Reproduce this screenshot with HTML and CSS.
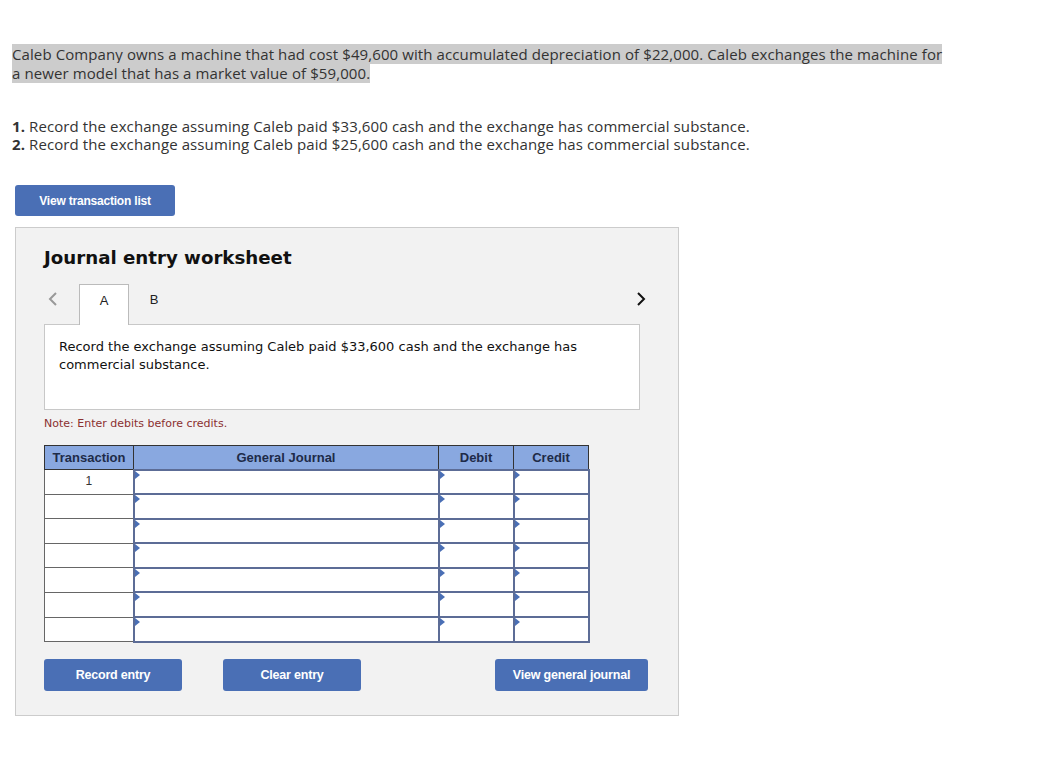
FILE: index.html
```html
<!DOCTYPE html>
<html>
<head>
<meta charset="utf-8">
<link rel="stylesheet" href="styles.css">
</head>
<body>
<div class="page">
  <p class="problem"><span class="hl">Caleb Company owns a machine that had cost $49,600 with accumulated depreciation of $22,000. Caleb exchanges the machine for a newer model that has a market value of $59,000.</span></p>
  <div class="reqs">
    <div><b>1.</b> Record the exchange assuming Caleb paid $33,600 cash and the exchange has commercial substance.</div>
    <div><b>2.</b> Record the exchange assuming Caleb paid $25,600 cash and the exchange has commercial substance.</div>
  </div>
  <button class="btn btn-list">View transaction list</button>
  <div class="panel">
    <h2 class="title">Journal entry worksheet</h2>
    <div class="tabs">
      <span class="arrow arrow-left"><svg width="10" height="14" viewBox="0 0 10 14"><path d="M8 1 L2 7 L8 13" fill="none" stroke="#999" stroke-width="2"/></svg></span>
      <span class="tab active">A</span>
      <span class="tab">B</span>
      <span class="spacer"></span>
      <span class="arrow arrow-right"><svg width="10" height="14" viewBox="0 0 10 14"><path d="M2 1 L8 7 L2 13" fill="none" stroke="#111" stroke-width="2"/></svg></span>
    </div>
    <div class="desc">Record the exchange assuming Caleb paid $33,600 cash and the exchange has commercial substance.</div>
    <div class="note">Note: Enter debits before credits.</div>
    <table class="journal">
      <thead>
        <tr><th class="c-tr">Transaction</th><th class="c-gj">General Journal</th><th class="c-amt">Debit</th><th class="c-amt">Credit</th></tr>
      </thead>
      <tbody>
        <tr><td class="tr">1</td><td class="in"></td><td class="in"></td><td class="in"></td></tr>
        <tr><td class="tr"></td><td class="in"></td><td class="in"></td><td class="in"></td></tr>
        <tr><td class="tr"></td><td class="in"></td><td class="in"></td><td class="in"></td></tr>
        <tr><td class="tr"></td><td class="in"></td><td class="in"></td><td class="in"></td></tr>
        <tr><td class="tr"></td><td class="in"></td><td class="in"></td><td class="in"></td></tr>
        <tr><td class="tr"></td><td class="in"></td><td class="in"></td><td class="in"></td></tr>
        <tr><td class="tr"></td><td class="in"></td><td class="in"></td><td class="in"></td></tr>
      </tbody>
    </table>
    <div class="actions">
      <button class="btn btn-act">Record entry</button>
      <button class="btn btn-act btn-clear">Clear entry</button>
      <span class="spacer"></span>
      <button class="btn btn-view">View general journal</button>
    </div>
  </div>
</div>
</body>
</html>
```

FILE: styles.css
```css
* { box-sizing: border-box; }
body { margin: 0; background: #fff; }
.page { padding: 45px 0 0 12px; }
.problem {
  margin: 0;
  width: 936px;
  font-family: "Open Sans", "Lato", sans-serif;
  font-size: 15px;
  letter-spacing: 0.1px;
  line-height: 19px;
  color: #333;
}
.hl { background: #ccc; }
.reqs {
  margin-top: 34px;
  font-family: "Open Sans", "Lato", sans-serif;
  font-size: 15px;
  letter-spacing: 0.1px;
  line-height: 18px;
  color: #333;
}
.reqs b { font-weight: 700; }
.btn {
  border: none;
  border-radius: 3px;
  background: #4a6fb5;
  color: #fff;
  font-family: "Liberation Sans", Arial, sans-serif;
  font-weight: bold;
  font-size: 12px;
  letter-spacing: -0.2px;
  cursor: pointer;
  padding: 0;
}
.btn-list { display: block; margin: 32px 0 0 3px; width: 160px; height: 31px; }
.panel {
  margin: 11px 0 0 3px;
  width: 664px;
  height: 489px;
  background: #f2f2f2;
  border: 1px solid #ccc;
  padding: 18px 38px 0 28px;
}
.title {
  margin: 0;
  font-family: "DejaVu Sans", Verdana, sans-serif;
  font-weight: bold;
  font-size: 18.2px;
  line-height: 24px;
  color: #111;
}
.tabs {
  margin-top: 14px;
  display: flex;
  align-items: flex-end;
  height: 41px;
  position: relative;
  z-index: 1;
  margin-bottom: -1px;
}
.arrow { align-self: center; display: flex; margin-top: -12px; }
.arrow-left { margin-left: 4px; width: 31px; }
.arrow-right { margin-right: -6px; }
.tab {
  width: 50px;
  height: 41px;
  display: flex;
  justify-content: center;
  padding-top: 8px;
  font-family: "Liberation Sans", Arial, sans-serif;
  font-size: 13px;
  color: #222;
}
.tab.active {
  background: #fff;
  border: 1px solid #bbb;
  border-bottom: none;
}
.spacer { flex: 1; }
.desc {
  width: 596px;
  height: 86px;
  background: #fff;
  border: 1px solid #c8c8c8;
  padding: 13px 14px;
  font-family: "DejaVu Sans", Verdana, sans-serif;
  font-size: 13px;
  line-height: 18px;
  color: #111;
}
.note {
  margin-top: 7px;
  font-family: "DejaVu Sans", Verdana, sans-serif;
  font-size: 11px;
  line-height: 14px;
  color: #8b3030;
}
.journal {
  margin-top: 14px;
  border-collapse: collapse;
  font-family: "Liberation Sans", Arial, sans-serif;
  font-size: 13px;
}
.journal th {
  background: #89a8e0;
  color: #1e2b48;
  font-weight: bold;
  height: 24px;
  border: 1px solid #333;
  padding: 0;
}
.c-tr { width: 89px; }
.c-gj { width: 305px; }
.c-amt { width: 75px; }
.journal td { height: 24.6px; padding: 0; background: #fff; }
.journal td.tr {
  border: 1px solid #666;
  text-align: center;
  vertical-align: top;
  padding-top: 4px;
  color: #333;
  font-size: 12px;
}
.journal td.in {
  border: 2px solid #5c6c96;
  position: relative;
}
.journal td.in::before {
  content: "";
  position: absolute;
  left: 0;
  top: 0;
  border-left: 5px solid #4a6fb5;
  border-top: 4px solid transparent;
  border-bottom: 4px solid transparent;
}
.actions {
  margin-top: 16px;
  display: flex;
  width: 604px;
}
.btn-act { width: 138px; height: 32px; font-size: 12.5px; }
.btn-clear { margin-left: 41px; }
.btn-view { width: 153px; height: 32px; font-size: 12.5px; }
```
